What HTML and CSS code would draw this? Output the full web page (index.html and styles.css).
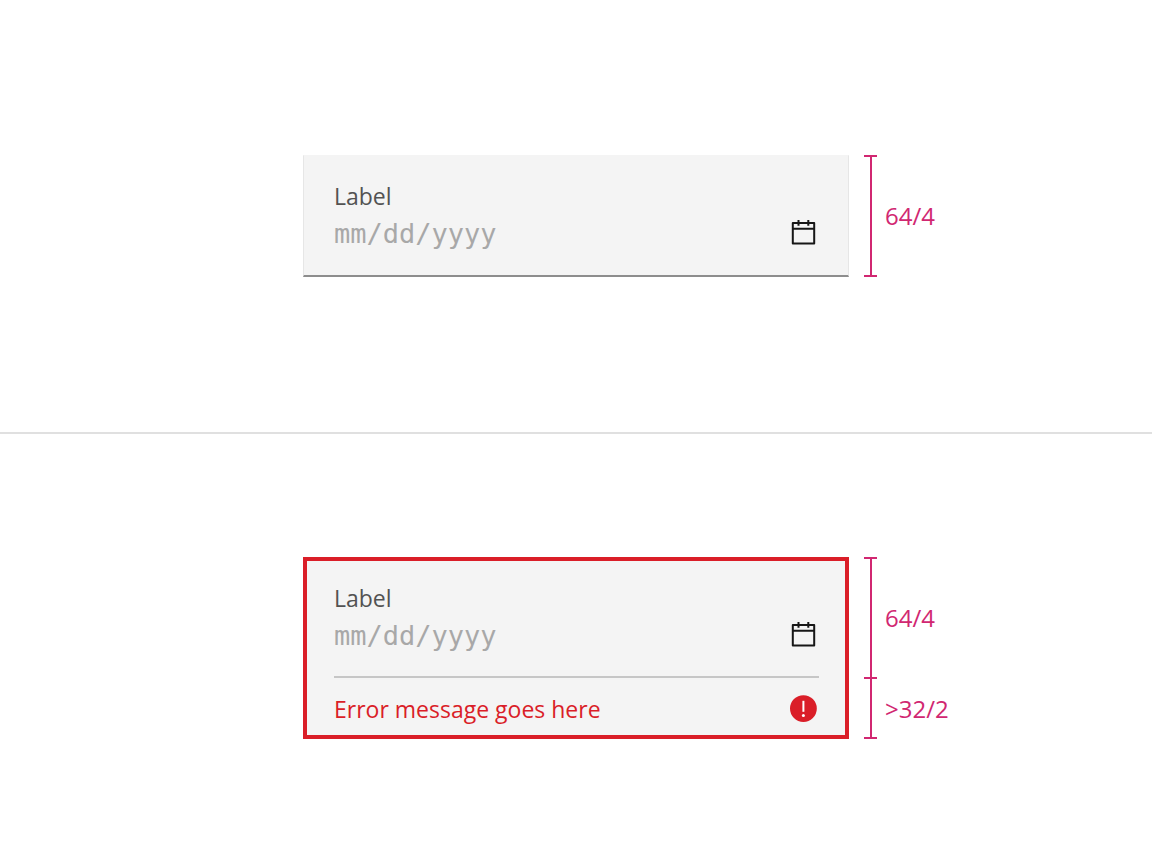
FILE: index.html
```html
<!DOCTYPE html>
<html lang="en">
<head>
<meta charset="utf-8">
<meta name="viewport" content="width=device-width, initial-scale=1">
<title>Fluid date input</title>
<link rel="stylesheet" href="styles.css">
</head>
<body>
<main class="page">
  <section class="example">
    <div class="field">
      <div class="entry">
        <div class="entry-text">
          <label class="label" for="date-default">Label</label>
          <input class="input" id="date-default" type="text" placeholder="mm/dd/yyyy">
        </div>
        <button class="calendar" type="button" aria-label="Open calendar">
          <svg class="icon" viewBox="0 0 28 28" aria-hidden="true">
            <path class="stroke" d="M3.8 5h21.4v20.6H3.8zM3.8 10.7h21.4M9.5 2v5.8M19.3 2v5.8"/>
          </svg>
        </button>
      </div>
    </div>
    <div class="ruler">
      <div class="measure measure-first"><span class="size">64/4</span></div>
    </div>
  </section>

  <section class="example">
    <div class="field field-invalid">
      <div class="entry">
        <div class="entry-text">
          <label class="label" for="date-invalid">Label</label>
          <input class="input" id="date-invalid" type="text" placeholder="mm/dd/yyyy" aria-invalid="true" aria-describedby="date-error">
        </div>
        <button class="calendar" type="button" aria-label="Open calendar">
          <svg class="icon" viewBox="0 0 28 28" aria-hidden="true">
            <path class="stroke" d="M3.8 5h21.4v20.6H3.8zM3.8 10.7h21.4M9.5 2v5.8M19.3 2v5.8"/>
          </svg>
        </button>
      </div>
      <div class="error">
        <p class="error-text" id="date-error">Error message goes here</p>
        <svg class="icon" viewBox="0 0 28 28" aria-hidden="true">
          <circle class="error-disc" cx="14.4" cy="13.6" r="13.4"/>
          <path class="error-mark" d="M13.4 5.8h2v11h-2z"/>
          <circle class="error-mark" cx="14.4" cy="20.5" r="1.5"/>
        </svg>
      </div>
    </div>
    <div class="ruler">
      <div class="measure measure-first"><span class="size">64/4</span></div>
      <div class="measure measure-rest"><span class="size">&gt;32/2</span></div>
    </div>
  </section>
</main>
</body>
</html>
```

FILE: styles.css
```css
* {
  box-sizing: border-box;
}

body {
  margin: 0;
  background: #fff;
  font-family: "Open Sans", "Noto Sans", sans-serif;
  font-size: 23px;
  line-height: 28px;
}

.page {
  display: grid;
  grid-template-rows: 1fr 1fr;
  min-height: 100vh;
}

.example {
  display: grid;
  grid-template-columns: 1fr minmax(0, 546px) 1fr;
  align-content: center;
  column-gap: 15px;
}

.example + .example {
  padding-bottom: 2px;
  border-top: 2px solid #e0e0e0;
}

.field {
  grid-column: 2;
  padding: 0 29px 0 30px;
  background: #f4f4f4;
  border: 1px solid #e6e6e6;
  border-top-color: #f4f4f4;
  border-bottom: 2px solid #8d8d8d;
}

.entry {
  display: flex;
  align-items: flex-end;
  padding: 26px 0 22px;
}

.entry-text {
  display: flex;
  flex: 1;
  flex-direction: column;
  gap: 3px;
  min-width: 0;
}

.label {
  color: #525252;
}

.input {
  width: 100%;
  height: 40px;
  padding: 0;
  border: 0;
  background: transparent;
  color: #161616;
  font-family: "DejaVu Sans Mono", monospace;
  font-size: 27px;
}

.input::placeholder {
  color: #a8a8a8;
  opacity: 1;
}

.calendar {
  display: flex;
  padding: 0 2px 7px;
  border: 0;
  background: transparent;
}

.icon {
  flex: none;
  width: 28px;
  height: 28px;
}

.stroke {
  fill: none;
  stroke: #161616;
  stroke-width: 2;
  stroke-linejoin: round;
}

.field-invalid {
  padding: 0 26px 0 27px;
  border: 4px solid #da1e28;
}

.field-invalid .entry {
  padding: 23px 0 21px;
}

.error {
  display: flex;
  align-items: center;
  justify-content: space-between;
  padding: 17px 2px 12px 0;
  border-top: 2px solid #c6c6c6;
}

.error-text {
  margin: 0;
  color: #da1e28;
}

.error-disc {
  fill: #da1e28;
}

.error-mark {
  fill: #fff;
}

.ruler {
  display: flex;
  flex-direction: column;
  color: #d12771;
  font-size: 24px;
}

.measure {
  display: flex;
  align-items: center;
  gap: 8px;
}

.measure::before {
  content: "";
  align-self: stretch;
  width: 13px;
  border: solid #d12771;
  border-width: 2px 0;
  background: linear-gradient(#d12771, #d12771) center / 2px 100% no-repeat;
}

.measure-first {
  flex: 0 0 122px;
}

.measure-rest {
  flex: 1;
}

.measure-rest::before {
  border-top: 0;
}
```
